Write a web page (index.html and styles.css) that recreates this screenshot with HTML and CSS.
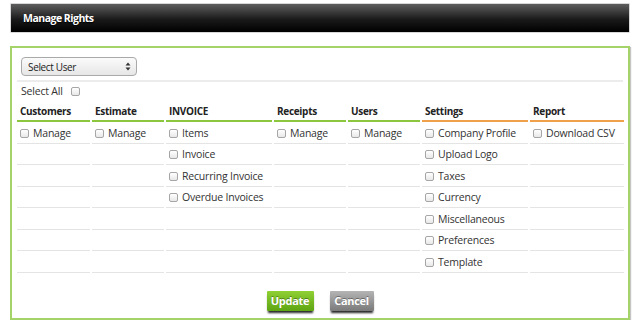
FILE: index.html
```html
<!DOCTYPE html>
<html>
<head>
<meta charset="utf-8">
<link rel="stylesheet" href="styles.css">
</head>
<body>
<div class="page">
  <div class="titlebar"><h1 class="title">Manage Rights</h1></div>
  <div class="panel">
    <div class="select-row">
      <div class="select"><span>Select User</span>
        <svg class="arrows" width="6" height="9" viewBox="0 0 6 9"><path d="M3 0.5 L5.5 3.5 H0.5 Z M3 8.5 L5.5 5.5 H0.5 Z" fill="#333"/></svg>
      </div>
    </div>
    <div class="select-all"><span>Select All</span><span class="cb"></span></div>
    <table class="rights">
      <colgroup>
        <col class="c1"><col class="c2"><col class="c3"><col class="c4"><col class="c5"><col class="c6"><col class="c7">
      </colgroup>
      <thead>
        <tr>
          <th class="g">Customers</th><th class="g">Estimate</th><th class="g">INVOICE</th><th class="g">Receipts</th><th class="g">Users</th><th class="o">Settings</th><th class="o">Report</th>
        </tr>
      </thead>
      <tbody>
        <tr><td><span class="cb"></span>Manage</td><td><span class="cb"></span>Manage</td><td><span class="cb"></span>Items</td><td><span class="cb"></span>Manage</td><td><span class="cb"></span>Manage</td><td><span class="cb"></span>Company Profile</td><td><span class="cb"></span>Download CSV</td></tr>
        <tr><td></td><td></td><td><span class="cb"></span>Invoice</td><td></td><td></td><td><span class="cb"></span>Upload Logo</td><td></td></tr>
        <tr><td></td><td></td><td><span class="cb"></span>Recurring Invoice</td><td></td><td></td><td><span class="cb"></span>Taxes</td><td></td></tr>
        <tr><td></td><td></td><td><span class="cb"></span>Overdue Invoices</td><td></td><td></td><td><span class="cb"></span>Currency</td><td></td></tr>
        <tr><td></td><td></td><td></td><td></td><td></td><td><span class="cb"></span>Miscellaneous</td><td></td></tr>
        <tr><td></td><td></td><td></td><td></td><td></td><td><span class="cb"></span>Preferences</td><td></td></tr>
        <tr><td></td><td></td><td></td><td></td><td></td><td><span class="cb"></span>Template</td><td></td></tr>
      </tbody>
    </table>
    <div class="actions">
      <button class="btn btn-update">Update</button>
      <button class="btn btn-cancel">Cancel</button>
    </div>
  </div>
</div>
</body>
</html>
```
FILE: styles.css
```css
html, body { margin: 0; padding: 0; background: #fff; }
body { font-family: "Open Sans", "Liberation Sans", sans-serif; color: #333; font-size: 10.5px; letter-spacing: -0.2px; }
.page { padding: 3px 10px 0; }
.titlebar {
  height: 28px;
  background: linear-gradient(#5e5e5e, #1a1a1a 55%, #000);
  border: 1px solid #d8d8d8;
  border-radius: 1px;
  display: flex; align-items: center;
  padding-left: 12px;
  box-sizing: content-box;
}
.title {
  margin: 0; font-size: 10.5px; font-weight: bold; color: #fff;
  letter-spacing: -0.5px;
  text-shadow: 0 1px 1px #000;
}
.panel {
  margin-top: 13px;
  border: 2px solid #a4d36a;
  box-shadow: 1px 1px 1px #c4c4c4;
  padding: 9px 5px 5px;
  height: 256px;
}
.select-row { padding-left: 4px; height: 20px; }
.select {
  border: 1px solid #a9a9a9;
  border-radius: 4px;
  background: linear-gradient(#fbfbfb, #e6e6e6);
  display: flex; align-items: center; justify-content: space-between;
  padding: 0 5px 0 6px;
  box-sizing: border-box;
  width: 116px; height: 19px;
  font-size: 10px; letter-spacing: -0.35px; color: #222;
}
.arrows { display: block; }
.select-all {
  border-top: 2px solid #ececec;
  margin-top: 3px;
  height: 18px;
  display: flex; align-items: center;
  padding-left: 4px;
  gap: 8px;
}
.cb {
  display: inline-block;
  width: 7px; height: 7px;
  border: 1px solid #a6a6a6;
  border-radius: 2px;
  background: linear-gradient(#fff, #e8e8e8);
  vertical-align: -1px;
  margin-right: 4px;
}
.select-all .cb { margin-right: 0; }
.rights {
  border-collapse: separate;
  border-spacing: 2px 0;
  table-layout: fixed;
  width: 610px;
  margin: 0 -2px;
}
.c1 { width: 73px; } .c2 { width: 72px; } .c3 { width: 106px; } .c4 { width: 72px; }
.c5 { width: 72px; } .c6 { width: 106px; } .c7 { width: 94px; }
.rights th {
  text-align: left; font-weight: bold; font-size: 10px; letter-spacing: -0.3px; color: #222;
  height: 19px; padding: 1px 0 0 3px;
  white-space: nowrap;
}
.rights th.g { border-bottom: 2px solid #8cc63f; }
.rights th.o { border-bottom: 2px solid #f0a04a; }
.rights td {
  height: 19.5px; padding: 1px 0 0 3px;
  border-bottom: 1px solid #e4e4e4;
  white-space: nowrap;
}
.actions {
  display: flex; justify-content: center; gap: 16px;
  margin-top: 18px;
}
.btn {
  height: 20px; padding: 0; border: 0;
  font-family: "Open Sans", "Liberation Sans", sans-serif;
  font-size: 11px; font-weight: bold; color: #fff; letter-spacing: -0.3px;
  text-shadow: 0 -1px 0 rgba(0,0,0,.35);
  border-radius: 1px;
  box-shadow: 0 3px 2px -1px rgba(0,0,0,.85);
}
.btn-update { background: linear-gradient(#8fd034, #5ea512); width: 47px; }
.btn-cancel { background: linear-gradient(#b4b4b4, #7a7a7a); width: 44px; }
```
